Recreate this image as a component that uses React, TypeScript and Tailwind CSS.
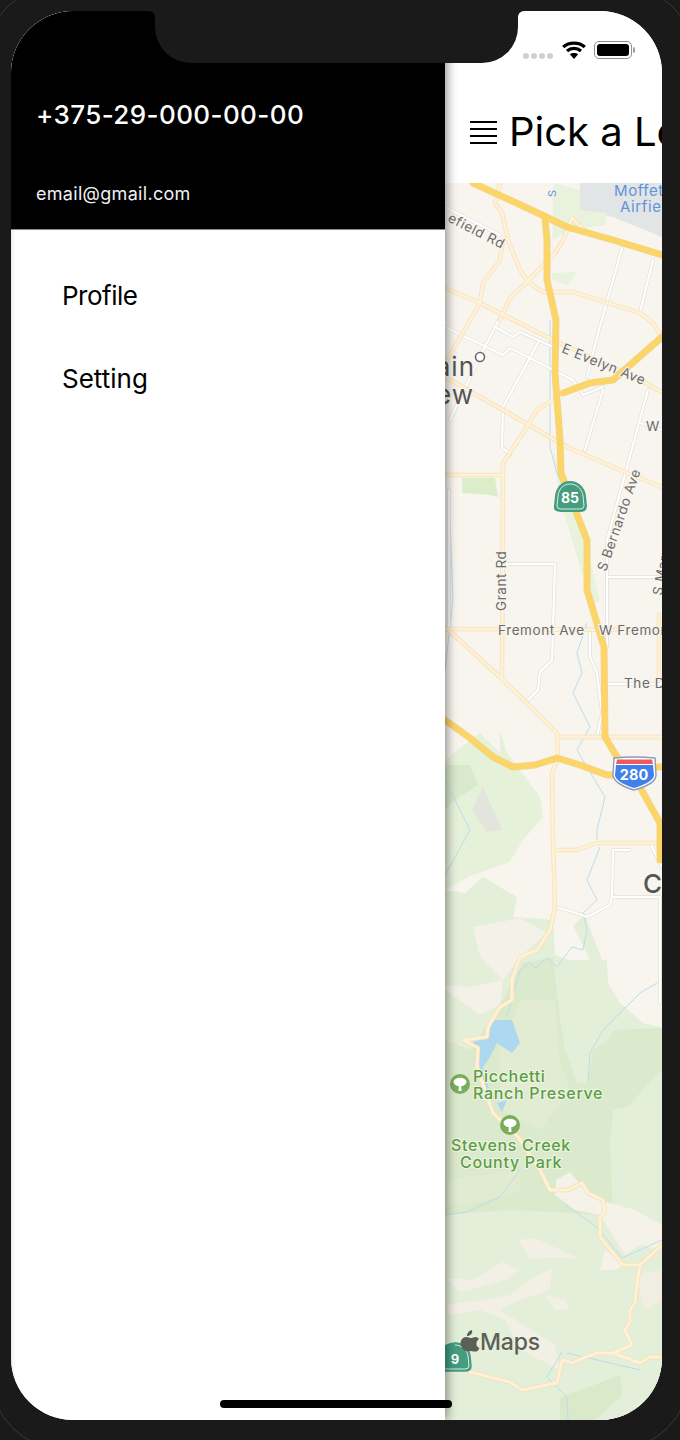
const mapFont = "'Inter', 'Liberation Sans', sans-serif";

const majorRoads = [
  "M473 183 L540 214 L567 227 L613 240 L662 255",
  "M545 218 L547 240 L547 280 L556 320 L555 373 L560 440 L561 473 L587 540 L587 590 L604 647 L605 737 L617 757 L640 787 L660 823 L660 860",
  "M445 720 L470 738 L493 757 L513 767 L535 765 L557 758 L580 765 L607 775 L625 775",
  "M645 767 L662 767",
  "M662 337 L613 380 L590 383 L563 393",
];

const secondaryRoads = [
  "M445 288 L480 303 L553 340 L640 380 L662 392",
  "M445 377 L503 410 L567 447 L627 473 L662 487",
  "M553 292 L573 292 L640 313 L653 323 L662 337",
  "M480 303 L447 360",
  "M503 240 L500 260 L483 283 L480 303",
  "M555 253 L527 282 L510 298 L500 320",
  "M502 213 L508 240 L520 270 L528 282 L543 292 L553 292",
  "M553 400 L537 410 L527 427 L503 463 L502 677",
  "M445 475 L502 475",
  "M445 629 L662 630",
  "M445 627 L500 677 L557 733 L558 757 L552 773 L553 840 L555 907 L550 930 L537 950 L520 957 L512 980 L512 1000 L500 1007 L488 1027 L487 1037 L463 1040 L478 1048 L477 1067 L493 1113 L518 1137 L540 1170 L550 1190 L568 1190 L582 1183 L588 1193 L603 1200 L605 1212 L600 1217 L600 1237 L623 1265 L640 1265 L637 1283 L635 1303 L630 1310 L630 1322 L625 1330 L632 1345 L613 1353 L597 1353 L583 1358 L573 1363 L562 1360 L557 1383 L522 1390 L510 1382 L470 1372",
  "M560 737 L662 737",
  "M555 850 L577 850 L597 843 L657 843",
  "M613 1353 L640 1363 L650 1357 L662 1357",
  "M640 1265 L662 1245",
  "M659 615 L659 680",
  "M500 183 L495 203 L502 213",
  "M572 218 L563 240 L555 253",
  "M572 218 L587 233",
];

const streets = [
  "M445 207 L500 235",
  "M622 248 L597 337 L587 377",
  "M653 260 L640 312",
  "M445 327 L503 355 L510 348 L573 380 L583 395 L603 387",
  "M497 328 L513 337 L520 332 L553 347",
  "M538 343 L503 407 L502 447 L510 455",
  "M500 318 L483 350 L450 420",
  "M603 390 L585 450",
  "M648 390 L627 467 L607 540 L607 647",
  "M640 423 L662 430",
  "M507 564 L555 564 L552 660 L540 672 L538 690 L528 700",
  "M607 577 L660 577",
  "M590 633 L590 657 L597 673 L602 713 L597 737",
  "M608 684 L662 684",
  "M630 850 L613 850 L612 897 L610 905 L587 917 L573 912 L555 907",
  "M612 897 L660 897 L660 1003",
  "M650 843 L662 867",
  "M449 490 L449 630",
];

const rivers = [
  "M600 847 L587 880 L597 900 L583 913 L587 930 L583 950 L572 947 L557 967 L547 958 L535 968 L530 962 L520 970 L507 1017",
  "M657 983 L640 993 L603 1030 L590 1053 L588 1083",
  "M587 623 L577 653 L582 673 L573 693 L590 727 L577 750 L605 797 L597 830 L597 840",
  "M445 1215 L467 1212 L500 1197 L520 1170",
  "M565 1205 L597 1227 L622 1258 L662 1240",
  "M562 1352 L547 1377 L567 1397 L568 1420",
  "M567 1353 L640 1370",
  "M550 320 L550 447 L557 473 L573 510",
  "M450 520 L453 600 L445 670",
  "M445 780 L470 830 L445 875",
];

function RoadLayer({ paths, casing, fill, width }: { paths: string[]; casing: string; fill: string; width: number }) {
  return (
    <g fill="none" strokeLinejoin="round" strokeLinecap="round">
      {paths.map((d) => (
        <path key={d + "c"} d={d} stroke={casing} strokeWidth={width + 1.4} />
      ))}
      {paths.map((d) => (
        <path key={d} d={d} stroke={fill} strokeWidth={width} />
      ))}
    </g>
  );
}

function ParkPin({ x, y }: { x: number; y: number }) {
  return (
    <g>
      <circle cx={x} cy={y} r="10" fill="#79ad5c" />
      <ellipse cx={x} cy={y - 2} rx="6.5" ry="4.2" fill="#fff" />
      <path d={`M${x - 1} ${y + 1} h2 l0.6 6 h-3.2 z`} fill="#fff" />
    </g>
  );
}

function MapView() {
  return (
    <svg viewBox="445 183 217 1237" className="block h-[1237px] w-[217px]" fontFamily={mapFont}>
      <rect x="445" y="183" width="217" height="1237" fill="#f8f5ef" />

      {/* airfield + creek strip up top */}
      <path d="M580 183 L662 183 L662 237 L613 217 L580 210 Z" fill="#e2e5e6" />
      <path d="M553 183 L580 190 L580 210 L607 213 L605 225 L570 230 L553 240 L552 273 L577 272 L568 285 L552 280 Z" fill="#e8f2dc" />
      <path d="M462 478 L495 478 L498 497 L490 495 L462 493 Z" fill="#dcedc9" />
      <path d="M552 440 L560 480 L575 515 L585 540 L600 600 L592 606 L578 560 L560 500 Z" fill="#e8f2dc" />

      {/* hills */}
      <path d="M445 760 L480 733 L500 753 L500 730 L507 753 L540 797 L543 817 L523 840 L510 862 L470 876 L445 890 Z" fill="#e6f1da" />
      <path d="M445 765 L470 765 L478 785 L455 800 L445 810 Z" fill="#d9e9cc" />
      <path d="M472 810 L483 787 L502 830 L487 832 Z" fill="#e3e4de" />
      <path d="M445 890 L465 893 L483 877 L517 897 L513 917 L553 920 L555 955 L570 960 L590 960 L573 925 L585 915 L602 960 L607 960 L608 983 L620 1003 L643 1023 L662 1028 L662 1420 L445 1420 Z" fill="#e3efd8" />
      <path d="M473 927 L520 918 L547 933 L520 957 L503 980 L480 957 Z" fill="#f4f1e8" />
      <path d="M445 985 L470 987 L503 980 L500 1005 L480 1015 L445 990 Z" fill="#f4f1e8" />
      <path d="M523 963 L553 957 L560 1020 L565 1050 L577 1083 L588 1083 L593 1050 L610 1038 L613 1030 L662 1028 L662 1070 L627 1107 L613 1110 L610 1140 L613 1216 L555 1212 L510 1210 L445 1215 L445 1040 L470 1050 L500 1005 Z" fill="#dbeacc" />
      <path d="M520 1000 L555 1000 L560 1060 L570 1090 L540 1130 L500 1110 L500 1050 Z" fill="#e1ecd2" />
      <path d="M445 1180 L520 1170 L520 1190 L470 1205 L445 1205 Z" fill="#e0ebd2" />

      {/* pale patches in the south hills */}
      <path d="M556 1180 L570 1172 L585 1190 L600 1200 L635 1210 L662 1225 L662 1250 L640 1245 L625 1255 L600 1215 L575 1210 L555 1195 Z" fill="#f5f2ea" />
      <path d="M518 1240 L535 1238 L578 1258 L540 1258 L530 1260 Z" fill="#f2efe5" />
      <path d="M605 1250 L625 1265 L615 1270 L600 1270 Z" fill="#f5f2ea" />
      <path d="M445 1278 L472 1280 L503 1262 L520 1270 L505 1280 L470 1290 L460 1292 Z" fill="#f2efe5" />
      <path d="M530 1280 L552 1268 L550 1290 L520 1300 L500 1310 L555 1345 L560 1370 L520 1350 L505 1320 L480 1310 L450 1315 L445 1305 L480 1300 L510 1295 Z" fill="#f2efe5" />
      <path d="M545 1295 L565 1300 L570 1310 L555 1310 Z" fill="#f2efe5" />
      <path d="M635 1275 L662 1270 L662 1300 L645 1310 Z" fill="#f0eee2" />
      <path d="M560 1398 L620 1375 L622 1395 L595 1420 L560 1420 Z" fill="#d9e9c9" />

      {/* water */}
      <path d="M493 1020 L512 1020 L520 1043 L512 1053 L497 1043 L490 1057 L483 1067 L490 1093 L482 1087 L478 1053 L470 1043 L487 1037 Z" fill="#aed8f0" />
      <path d="M497 1103 L507 1100 L502 1112 Z" fill="#aed8f0" />
      <g fill="none" stroke="#bcdcee" strokeWidth="1">
        {rivers.map((d) => (
          <path key={d} d={d} />
        ))}
      </g>

      <RoadLayer paths={streets} casing="#e3e0d9" fill="#ffffff" width={2.2} />
      <RoadLayer paths={secondaryRoads} casing="#f8dfb3" fill="#fdf1d8" width={3} />
      <RoadLayer paths={majorRoads} casing="#f3d38e" fill="#fbd568" width={5.6} />

      {/* street names */}
      <g fill="#6b6b6b" fontSize="13.5" letterSpacing="0.6" stroke="#f8f5ef" strokeWidth="2" paintOrder="stroke">
        <text transform="translate(447 221) rotate(27)">efield Rd</text>
        <text transform="translate(561 352) rotate(22)">E Evelyn Ave</text>
        <text x="646" y="431">W</text>
        <text transform="translate(606 572) rotate(-71)">S Bernardo Ave</text>
        <text transform="translate(662 596) rotate(-80)">S Mary Ave</text>
        <text transform="translate(506 611) rotate(-90)">Grant Rd</text>
        <text x="498" y="635">Fremont Ave</text>
        <text x="599" y="635">W Fremont</text>
        <text x="624" y="688">The D</text>
        <text transform="translate(556 197) rotate(-90)" fill="#5f93da" fontSize="11">S</text>
      </g>
      <g fill="#5f93da" fontSize="15" letterSpacing="0.6">
        <text x="614" y="196">Moffett</text>
        <text x="620" y="212">Airfield</text>
      </g>
      <g fill="#555" fontSize="26" letterSpacing="1" stroke="#f8f5ef" strokeWidth="2" paintOrder="stroke">
        <text x="475" y="376" textAnchor="end">Mountain</text>
        <text x="474" y="404" textAnchor="end">View</text>
        <text x="643" y="893" fontWeight="500">C</text>
      </g>
      <circle cx="480" cy="357" r="4.5" fill="#fff" stroke="#6b6b6b" strokeWidth="1.6" />

      {/* parks */}
      <ParkPin x={460} y={1084} />
      <ParkPin x={510} y={1125} />
      <g fill="#5d9d45" fontSize="16" fontWeight="500" letterSpacing="0.7" stroke="#eef5e4" strokeWidth="2" paintOrder="stroke">
        <text x="473" y="1082">Picchetti</text>
        <text x="473" y="1099">Ranch Preserve</text>
        <text x="451" y="1151">Stevens Creek</text>
        <text x="460" y="1168">County Park</text>
      </g>

      {/* route shields */}
      <g>
        <path d="M570 482 C578 482 584 488 585 496 L586 506 Q586 511 580 511 L561 511 Q554 511 555 506 L556 496 C557 488 562 482 570 482 Z" fill="#459d80" stroke="#459d80" strokeWidth="2" />
        <path d="M570 484 C577 484 582 489 583 496 L584 506 Q584 509 580 509 L561 509 Q557 509 557 506 L558 496 C559 489 563 484 570 484 Z" fill="none" stroke="#fff" strokeWidth="0.8" />
        <text x="570" y="503" fill="#fff" fontSize="14" fontWeight="700" textAnchor="middle">85</text>
      </g>
      <g>
        <path d="M614 758 Q634 756 655 758 L656 775 C656 780 650 786 634 790 C620 786 613 780 613 775 Z" fill="#fff" stroke="#8d9bb5" strokeWidth="1.4" />
        <path d="M616 765 L653 765 L654 775 C654 779 648 784 634 788 C621 784 615 779 615 775 Z" fill="#3f80ea" />
        <path d="M617 759.5 L652 759.5 L653 764 L616 764 Z" fill="#ee5b5f" />
        <text x="634" y="780" fill="#fff" fontSize="14.5" fontWeight="700" textAnchor="middle">280</text>
      </g>
      <g>
        <path d="M455 1343 C463 1343 469 1349 470 1356 L471 1366 Q471 1371 465 1371 L438 1371 L438 1350 C445 1345 450 1343 455 1343 Z" fill="#459d80" stroke="#459d80" strokeWidth="1.5" />
        <path d="M455 1345 C462 1345 467 1350 468 1356 L469 1366 Q469 1369 465 1369 L438 1369" fill="none" stroke="#fff" strokeWidth="0.8" />
        <text x="455" y="1364" fill="#fff" fontSize="13" fontWeight="700" textAnchor="middle">9</text>
      </g>

      {/* attribution */}
      <g fill="#5c5f58">
        <path d="M472 1330 C468 1331 467 1334 467 1336 C470.5 1336 473 1333.5 472 1330 Z M462 1339 C466 1335 469 1338 471 1338 C473 1338 476 1335 479 1339 C475 1342 476 1347 479.5 1348 C477.5 1353 474.5 1351.5 471 1351 C468 1351 466 1352 464 1350 C460.5 1346.5 459.5 1342 462 1339 Z" />
        <text x="480" y="1350" fontSize="23" fontWeight="500" letterSpacing="-0.2">Maps</text>
      </g>
    </svg>
  );
}

function StatusIcons() {
  return (
    <div className="flex h-[48px] items-end justify-end gap-[8px] pr-[27px]">
      <div className="mr-[1px] flex gap-[2px]">
        <span className="h-[6px] w-[6px] rounded-full bg-[#cfcfcf]" />
        <span className="h-[6px] w-[6px] rounded-full bg-[#cfcfcf]" />
        <span className="h-[6px] w-[6px] rounded-full bg-[#cfcfcf]" />
        <span className="h-[6px] w-[6px] rounded-full bg-[#cfcfcf]" />
      </div>
      <svg width="24" height="18" viewBox="0 0 24 18" fill="none" stroke="#000" strokeWidth="3.2">
        <path d="M1.2 6 C7 0.8 17 0.8 22.8 6" />
        <path d="M5 10 C9 6.5 15 6.5 19 10" />
        <path d="M12 18 L7.8 13.2 C10 11.6 14 11.6 16.2 13.2 Z" fill="#000" stroke="none" />
      </svg>
      <div className="flex items-center">
        <div className="h-[18px] w-[38px] rounded-[5px] border border-[#8f8f8f] p-[2px]">
          <div className="h-full w-full rounded-[3px] bg-black" />
        </div>
        <span className="ml-[1px] h-[6px] w-[2px] rounded-r-full bg-[#9a9a9a]" />
      </div>
    </div>
  );
}

export default function App() {
  return (
    <div className="relative h-[1440px] w-[680px] overflow-hidden bg-[#1a1a1a] px-[11px] pb-[20px] pt-[11px] [font-family:Inter,'Liberation_Sans',sans-serif]">
      <div className="pointer-events-none absolute -inset-[10px] rounded-b-[75px] rounded-t-[57px] border border-[#3a3a3a]" />

      <div className="relative flex h-[1409px] w-[651px] overflow-hidden rounded-[62px] bg-white">
        <aside className="relative z-10 flex h-full w-[434px] shrink-0 flex-col bg-white shadow-[2px_0_10px_rgba(0,0,0,0.45),inset_4px_0_4px_-3px_rgba(0,0,0,0.12)]">
          <header className="flex h-[219px] flex-col border-b border-[#888] bg-black pl-[25px] pt-[87px] text-white">
            <p className="text-[26px] font-medium leading-[34px] tracking-[0.4px]">+375-29-000-00-00</p>
            <p className="mt-[51px] text-[18px] leading-[22px] tracking-[0.3px] text-[#f0f0f0]">email@gmail.com</p>
          </header>
          <nav className="flex flex-col pl-[51px] pt-[48px] text-[26px] leading-[36px] text-black">
            <a className="tracking-[-0.5px]">Profile</a>
            <a className="mt-[47px]">Setting</a>
          </nav>
        </aside>

        <main className="flex h-full min-w-0 flex-1 flex-col overflow-hidden">
          <div className="h-[172px] shrink-0 bg-white">
            <StatusIcons />
            <div className="flex items-center pl-[25px] pt-[48px]">
              <div className="flex w-[27px] shrink-0 flex-col gap-[5px]">
                <span className="h-[2px] bg-black" />
                <span className="h-[2px] bg-black" />
                <span className="h-[2px] bg-black" />
                <span className="h-[2px] bg-black" />
              </div>
              <h1 className="ml-[12px] whitespace-nowrap text-[40px] font-normal leading-[50px] text-black">
                Pick a Location
              </h1>
            </div>
          </div>
          <MapView />
        </main>

        <div className="absolute left-[138px] top-0 z-20 h-[6px] w-[6px] bg-[#1a1a1a]">
          <div className="h-full w-full rounded-tr-[6px] bg-black" />
        </div>
        <div className="absolute left-[507px] top-0 z-20 h-[6px] w-[6px] bg-[#1a1a1a]">
          <div className="h-full w-full rounded-tl-[6px] bg-white" />
        </div>
        <div className="absolute left-[144px] top-0 z-20 h-[52px] w-[363px] rounded-b-[36px] bg-[#1a1a1a]" />
        <div className="absolute bottom-[12px] left-[209px] z-20 h-[8px] w-[232px] rounded-full bg-black" />
      </div>
    </div>
  );
}
